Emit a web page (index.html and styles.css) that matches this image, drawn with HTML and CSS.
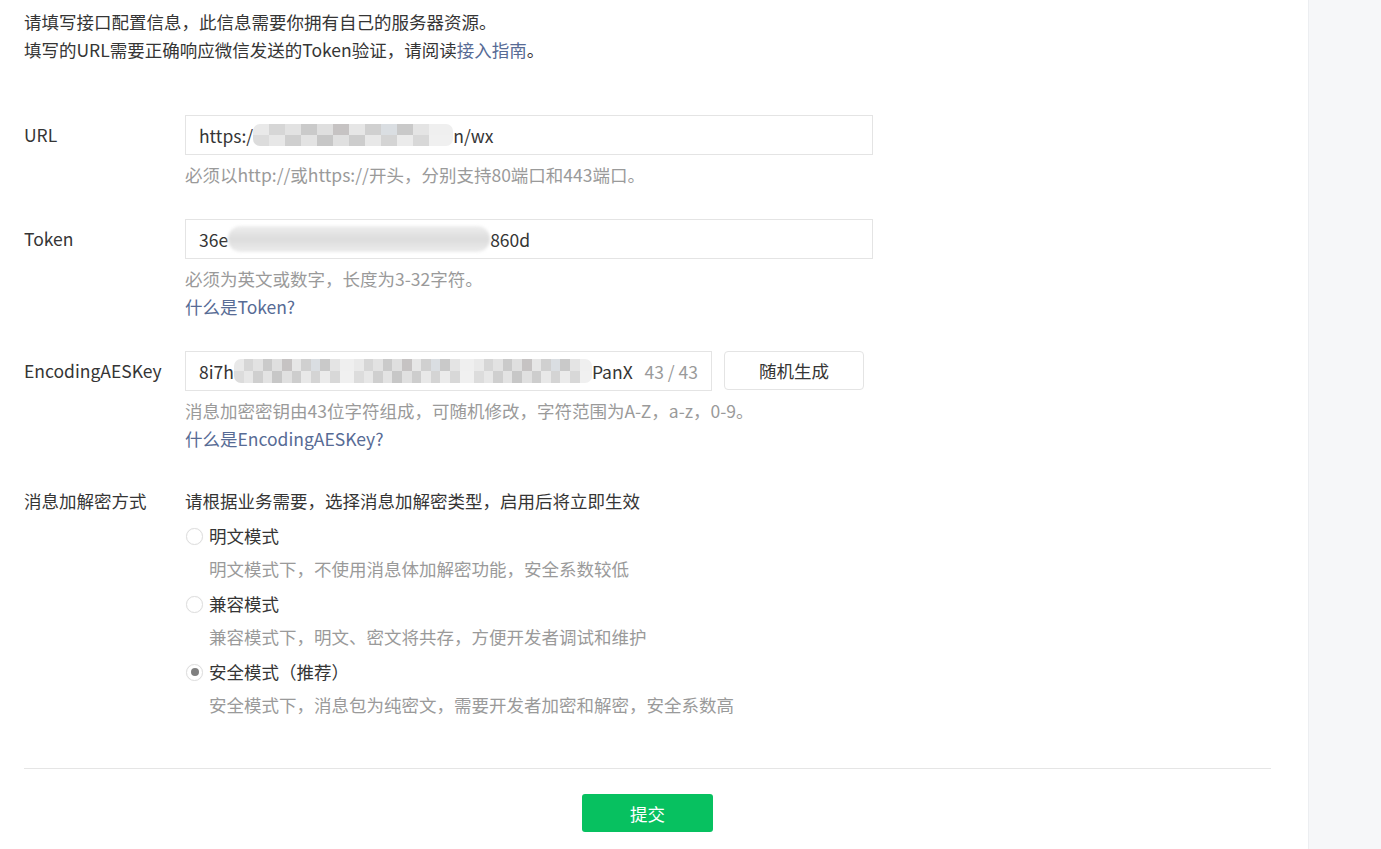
FILE: index.html
```html
<!DOCTYPE html>
<html lang="zh-CN">
<head>
<meta charset="utf-8">
<title>服务器配置</title>
<link rel="stylesheet" href="styles.css">
</head>
<body>
<div class="page">
  <main class="main">
    <div class="intro">
      <p>请填写接口配置信息，此信息需要你拥有自己的服务器资源。</p>
      <p>填写的URL需要正确响应微信发送的Token验证，请阅读<a class="link">接入指南</a>。</p>
    </div>

    <div class="form">
      <div class="row row-url">
        <div class="label">URL</div>
        <div class="control">
          <div class="input">
            <span>https:/</span><span class="mosaic mosaic-url"></span><span>n/wx</span>
          </div>
          <div class="hint">必须以http://或https://开头，分别支持80端口和443端口。</div>
        </div>
      </div>

      <div class="row">
        <div class="label">Token</div>
        <div class="control">
          <div class="input">
            <span>36e</span><span class="smudge smudge-token"></span><span>860d</span>
          </div>
          <div class="hint">必须为英文或数字，长度为3-32字符。</div>
          <a class="link line">什么是Token?</a>
        </div>
      </div>

      <div class="row">
        <div class="label">EncodingAESKey</div>
        <div class="control">
          <div class="aes">
            <div class="input input-aes">
              <span>8i7h</span><span class="mosaic mosaic-aes"></span><span>PanX</span>
              <span class="count">43 / 43</span>
            </div>
            <button class="btn-gen">随机生成</button>
          </div>
          <div class="hint">消息加密密钥由43位字符组成，可随机修改，字符范围为A-Z，a-z，0-9。</div>
          <a class="link line">什么是EncodingAESKey?</a>
        </div>
      </div>

      <div class="row row-mode">
        <div class="label">消息加解密方式</div>
        <div class="control">
          <div class="line">请根据业务需要，选择消息加解密类型，启用后将立即生效</div>
          <div class="radio"><span class="dot"></span>明文模式</div>
          <div class="desc">明文模式下，不使用消息体加解密功能，安全系数较低</div>
          <div class="radio"><span class="dot"></span>兼容模式</div>
          <div class="desc">兼容模式下，明文、密文将共存，方便开发者调试和维护</div>
          <div class="radio"><span class="dot checked"></span>安全模式（推荐）</div>
          <div class="desc">安全模式下，消息包为纯密文，需要开发者加密和解密，安全系数高</div>
        </div>
      </div>
    </div>

    <div class="footer">
      <button class="btn-submit">提交</button>
    </div>
  </main>
  <aside class="side"></aside>
</div>
</body>
</html>
```

FILE: styles.css
```css
html, body {
  margin: 0;
  padding: 0;
  background: #ffffff;
}
body {
  font-family: "Noto Sans CJK SC", "Noto Sans", sans-serif;
  font-size: 17.5px;
  color: #353535;
}
.page {
  display: flex;
  min-height: 849px;
}
.main {
  width: 1308px;
  box-sizing: border-box;
  padding: 8px 37px 0 24px;
  background: #fff;
}
.side {
  flex: 1;
  background: #f6f7f9;
  border-left: 1px solid #eceef1;
}
.intro p {
  margin: 0;
  line-height: 28px;
}
.link {
  color: #576b95;
  text-decoration: none;
  cursor: pointer;
}
.form {
  margin-top: 51px;
}
.row {
  display: flex;
  margin-bottom: 30px;
}
.label {
  width: 161px;
  flex: none;
  line-height: 40px;
}
.control {
  display: flex;
  flex-direction: column;
  align-items: flex-start;
}
.input {
  width: 688px;
  height: 40px;
  box-sizing: border-box;
  border: 1px solid #e4e4e4;
  padding: 0 13px;
  display: flex;
  align-items: center;
  white-space: nowrap;
}
.hint {
  color: #9a9a9a;
  line-height: 28px;
  margin-top: 6px;
}
.line {
  display: block;
  line-height: 28px;
}
.aes {
  display: flex;
  gap: 12px;
}
.input-aes {
  width: 527px;
}
.count {
  margin-left: auto;
  color: #9a9a9a;
}
.btn-gen {
  width: 140px;
  height: 39px;
  background: #fff;
  border: 1px solid #e4e4e4;
  border-radius: 4px;
  font: inherit;
  color: #353535;
}
.mosaic {
  display: inline-block;
  height: 22px;
  border-radius: 7px;
  background-image:
    linear-gradient(90deg,
      #e9e9e9 0 8%, #d6d6d6 8% 16%, #e2e2e2 16% 24%, #cacaca 24% 32%,
      #dfdfdf 32% 40%, #c6c3c3 40% 48%, #e6e6e6 48% 56%, #d0d0d0 56% 64%,
      #dadee2 64% 72%, #c9c9c9 72% 80%, #e4e4e4 80% 88%, #efefef 88% 100%),
    linear-gradient(90deg,
      #dcdcdc 0 8%, #e7e7e7 8% 16%, #cfcfcf 16% 24%, #e3e3e3 24% 32%,
      #c7c7c7 32% 40%, #e0e0e0 40% 48%, #cdcdcd 48% 56%, #e8e8e8 56% 64%,
      #d4d4d4 64% 72%, #ebebeb 72% 80%, #d8d8d8 80% 88%, #f0f0f0 88% 100%);
  background-size: 100% 50%, 100% 50%;
  background-position: 0 0, 0 100%;
  background-repeat: no-repeat;
  filter: blur(0.5px);
}
.mosaic-url {
  width: 200px;
}
.mosaic-aes {
  width: 358px;
  height: 24px;
  background-size: 120px 50%, 120px 50%;
  background-repeat: repeat-x;
}
.smudge {
  display: inline-block;
  height: 26px;
  border-radius: 13px;
  background: linear-gradient(180deg, #eeeeee, #dcdcdc 50%, #ececec);
  filter: blur(1.5px);
}
.smudge-token {
  width: 262px;
}
.row-mode {
  margin-top: 34px;
}
.row-mode .label {
  line-height: 28px;
}
.radio {
  display: flex;
  align-items: center;
  line-height: 28px;
  margin-top: 7px;
}
.dot {
  width: 17px;
  height: 17px;
  box-sizing: border-box;
  border: 1px solid #dedede;
  box-shadow: 0 0 1px rgba(0, 0, 0, 0.08);
  border-radius: 50%;
  margin: 0 6px 0 1px;
  background: #fff;
  position: relative;
}
.dot.checked::after {
  content: "";
  position: absolute;
  left: 3.5px;
  top: 3.5px;
  width: 8px;
  height: 8px;
  border-radius: 50%;
  background: #7f7f7f;
}
.desc {
  color: #9a9a9a;
  line-height: 28px;
  margin-top: 5px;
  padding-left: 24px;
}
.footer {
  margin-top: 49px;
  border-top: 1px solid #e5e5e5;
  padding-top: 25px;
  display: flex;
  justify-content: center;
}
.btn-submit {
  width: 131px;
  height: 38px;
  border: 0;
  border-radius: 3px;
  background: #07c160;
  color: #fff;
  font: inherit;
}
```
